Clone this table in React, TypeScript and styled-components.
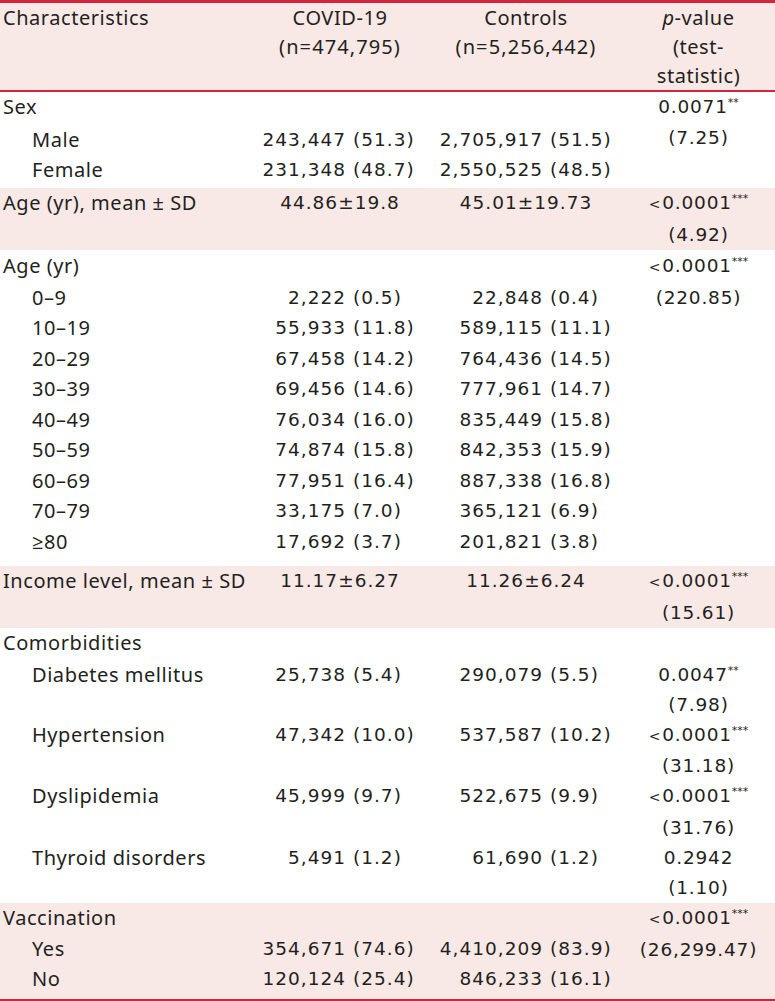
import React from "react";
import styled, { createGlobalStyle } from "styled-components";

const RED = "#d0253c";
const PINK = "#f9e9e6";
const INK = "#231f20";
const NUM_FONT = `"DejaVu Sans", "Noto Sans", sans-serif`;

const Global = createGlobalStyle`
  html, body { margin: 0; padding: 0; background: #ffffff; }
  body { font-family: "Noto Sans", "Open Sans", sans-serif; color: ${INK}; }
`;

const Table = styled.table`
  width: 775px;
  table-layout: fixed;
  border-collapse: collapse;
  border-bottom: 2px solid ${RED};
  font-size: 20px;
  letter-spacing: 0.55px;
`;

const HeadRow = styled.tr`
  background: ${PINK};
  border-top: 3px solid ${RED};
  border-bottom: 2px solid ${RED};
`;

const HeadCell = styled.th<{ $align?: "left" | "center" }>`
  font-weight: 400;
  line-height: 29px;
  padding: 0 0 0 ${(p) => (p.$align === "left" ? "3px" : "0")};
  text-align: ${(p) => p.$align ?? "center"};
  vertical-align: top;
  white-space: nowrap;
`;

const Count = styled.span`
  letter-spacing: 1.1px;
`;

const Row = styled.tr<{ $band?: boolean }>`
  background: ${(p) => (p.$band ? PINK : "transparent")};
`;

const Cell = styled.td<{ $top?: number; $bottom?: number; $tight?: boolean }>`
  line-height: ${(p) => (p.$tight ? "30.2px" : "30.5px")};
  padding-top: ${(p) => p.$top ?? 0}px;
  padding-bottom: ${(p) => p.$bottom ?? 0}px;
  padding-left: 0;
  padding-right: 0;
  vertical-align: top;
`;

const LabelCell = styled(Cell)<{ $indent?: boolean }>`
  padding-left: ${(p) => (p.$indent ? "32px" : "3px")};
  white-space: nowrap;
`;

const Split = styled.div<{ $left: number }>`
  display: grid;
  grid-template-columns: ${(p) => p.$left}px auto;
  column-gap: 7px;
  font-family: ${NUM_FONT};
  font-size: 18.5px;
  letter-spacing: 1px;
`;

const Whole = styled.span`
  text-align: right;
  white-space: nowrap;
`;

const Pct = styled.span`
  text-align: left;
  white-space: nowrap;
`;

const Centered = styled.div`
  text-align: center;
  white-space: nowrap;
  font-family: ${NUM_FONT};
  font-size: 18.5px;
  letter-spacing: 1px;
`;

const PBlock = styled.div`
  text-align: center;
  white-space: nowrap;
  font-family: ${NUM_FONT};
  font-size: 18.5px;
  letter-spacing: 0.8px;
`;

const Lt = styled.span`
  font-size: 14px;
  margin-right: 1px;
`;

const Stars = styled.sup`
  font-size: 11px;
  line-height: 0;
  vertical-align: 7px;
  letter-spacing: 0;
`;

const Ital = styled.i`
  font-style: italic;
`;

type Item = {
  label: string;
  indent?: boolean;
  covid?: [string, string] | string;
  controls?: [string, string] | string;
  top?: number;
  bottom?: number;
};

type PVal = { lt?: boolean; v: string; stars: string; stat: string };

type Group = { band?: boolean; tight?: boolean; items: Item[]; p?: PVal };

const groups: Group[] = [
  {
    items: [
      { label: "Sex" },
      { label: "Male", indent: true, covid: ["243,447", "(51.3)"], controls: ["2,705,917", "(51.5)"], top: 2 },
      { label: "Female", indent: true, covid: ["231,348", "(48.7)"], controls: ["2,550,525", "(48.5)"], bottom: 2.5 },
    ],
    p: { v: "0.0071", stars: "**", stat: "(7.25)" },
  },
  {
    band: true,
    items: [{ label: "Age (yr), mean ± SD", covid: "44.86±19.8", controls: "45.01±19.73" }],
    p: { lt: true, v: "0.0001", stars: "***", stat: "(4.92)" },
  },
  {
    items: [
      { label: "Age (yr)", top: 1 },
      { label: "0–9", indent: true, covid: ["2,222", "(0.5)"], controls: ["22,848", "(0.4)"], top: 1 },
      { label: "10–19", indent: true, covid: ["55,933", "(11.8)"], controls: ["589,115", "(11.1)"] },
      { label: "20–29", indent: true, covid: ["67,458", "(14.2)"], controls: ["764,436", "(14.5)"] },
      { label: "30–39", indent: true, covid: ["69,456", "(14.6)"], controls: ["777,961", "(14.7)"] },
      { label: "40–49", indent: true, covid: ["76,034", "(16.0)"], controls: ["835,449", "(15.8)"] },
      { label: "50–59", indent: true, covid: ["74,874", "(15.8)"], controls: ["842,353", "(15.9)"] },
      { label: "60–69", indent: true, covid: ["77,951", "(16.4)"], controls: ["887,338", "(16.8)"] },
      { label: "70–79", indent: true, covid: ["33,175", "(7.0)"], controls: ["365,121", "(6.9)"] },
      { label: "≥80", indent: true, covid: ["17,692", "(3.7)"], controls: ["201,821", "(3.8)"], bottom: 9 },
    ],
    p: { lt: true, v: "0.0001", stars: "***", stat: "(220.85)" },
  },
  {
    band: true,
    items: [{ label: "Income level, mean ± SD", covid: "11.17±6.27", controls: "11.26±6.24", bottom: 2 }],
    p: { lt: true, v: "0.0001", stars: "***", stat: "(15.61)" },
  },
  { items: [{ label: "Comorbidities" }] },
  {
    tight: true,
    items: [{ label: "Diabetes mellitus", indent: true, covid: ["25,738", "(5.4)"], controls: ["290,079", "(5.5)"], top: 1 }],
    p: { v: "0.0047", stars: "**", stat: "(7.98)" },
  },
  {
    tight: true,
    items: [{ label: "Hypertension", indent: true, covid: ["47,342", "(10.0)"], controls: ["537,587", "(10.2)"] }],
    p: { lt: true, v: "0.0001", stars: "***", stat: "(31.18)" },
  },
  {
    tight: true,
    items: [{ label: "Dyslipidemia", indent: true, covid: ["45,999", "(9.7)"], controls: ["522,675", "(9.9)"] }],
    p: { lt: true, v: "0.0001", stars: "***", stat: "(31.76)" },
  },
  {
    tight: true,
    items: [{ label: "Thyroid disorders", indent: true, covid: ["5,491", "(1.2)"], controls: ["61,690", "(1.2)"] }],
    p: { v: "0.2942", stars: "", stat: "(1.10)" },
  },
  {
    band: true,
    items: [
      { label: "Vaccination" },
      { label: "Yes", indent: true, covid: ["354,671", "(74.6)"], controls: ["4,410,209", "(83.9)"] },
      { label: "No", indent: true, covid: ["120,124", "(25.4)"], controls: ["846,233", "(16.1)"], bottom: 4 },
    ],
    p: { lt: true, v: "0.0001", stars: "***", stat: "(26,299.47)" },
  },
];

const Value: React.FC<{ v?: [string, string] | string; left: number }> = ({ v, left }) => {
  if (!v) return null;
  if (typeof v === "string") return <Centered>{v}</Centered>;
  return (
    <Split $left={left}>
      <Whole>{v[0]}</Whole>
      <Pct>{v[1]}</Pct>
    </Split>
  );
};

const PValue: React.FC<{ p: PVal }> = ({ p }) => (
  <PBlock>
    <div>
      {p.lt && <Lt>&lt;</Lt>}
      {p.v}
      {p.stars && <Stars>{p.stars}</Stars>}
    </div>
    <div>{p.stat}</div>
  </PBlock>
);

export default function App() {
  return (
    <>
      <Global />
      <Table>
        <colgroup>
          <col style={{ width: 250 }} />
          <col style={{ width: 180 }} />
          <col style={{ width: 192 }} />
          <col style={{ width: 153 }} />
        </colgroup>
        <thead>
          <HeadRow>
            <HeadCell $align="left">Characteristics</HeadCell>
            <HeadCell>
              COVID-19
              <br />
              <Count>(n=474,795)</Count>
            </HeadCell>
            <HeadCell>
              Controls
              <br />
              <Count>(n=5,256,442)</Count>
            </HeadCell>
            <HeadCell>
              <Ital>p</Ital>-value
              <br />
              (test-
              <br />
              statistic)
            </HeadCell>
          </HeadRow>
        </thead>
        <tbody>
          {groups.map((g, gi) =>
            g.items.map((it, ii) => (
              <Row key={`${gi}-${ii}`} $band={g.band}>
                <LabelCell $top={it.top} $bottom={it.bottom} $tight={g.tight} $indent={it.indent}>
                  {it.label}
                </LabelCell>
                <Cell $top={it.top} $bottom={it.bottom} $tight={g.tight}>
                  <Value v={it.covid} left={96} />
                </Cell>
                <Cell $top={it.top} $bottom={it.bottom} $tight={g.tight}>
                  <Value v={it.controls} left={113} />
                </Cell>
                {ii === 0 && (
                  <Cell $top={it.top} $tight={g.tight} rowSpan={g.items.length}>
                    {g.p && <PValue p={g.p} />}
                  </Cell>
                )}
              </Row>
            ))
          )}
        </tbody>
      </Table>
    </>
  );
}
